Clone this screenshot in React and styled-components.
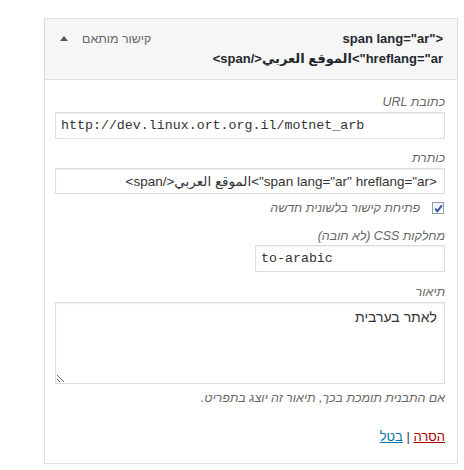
import styled, { createGlobalStyle } from "styled-components"

const GlobalStyle = createGlobalStyle`
    body {
        margin: 0;
        background: #fff;
        font-family: 'Liberation Sans', Arial, 'DejaVu Sans', sans-serif;
        font-size: 12.4px;
        color: #444;
    }
`

const Page = styled.div`
    padding: 18px 0 0 44px;
`

const Panel = styled.div`
    width: 412px;
    border: 1px solid #dfdfdf;
    direction: rtl;
`

const Header = styled.div`
    display: flex;
    justify-content: space-between;
    align-items: flex-start;
    background: #f6f6f6;
    border-bottom: 1px solid #dfdfdf;
    padding: 10px 14px 10px 15px;
`

const Title = styled.div`
    width: 236px;
    font-weight: bold;
    font-size: 13px;
    line-height: 20px;
    color: #23282d;
`

const Controls = styled.div`
    display: flex;
    align-items: center;
    gap: 14px;
    line-height: 20px;
    color: #666;
`

const Arrow = styled.span`
    width: 0;
    height: 0;
    border-left: 4px solid transparent;
    border-right: 4px solid transparent;
    border-bottom: 5px solid #555;
    margin-bottom: 1px;
`

const Body = styled.div`
    padding: 13px 12px 17px 10px;
`

const Field = styled.div`
    margin-top: ${p => p.$top || 0}px;
    display: flex;
    flex-direction: column;
    align-items: flex-start;
`

const Label = styled.label`
    font-style: italic;
    color: #666;
    line-height: 18px;
    margin-bottom: ${p => p.$gap ?? 1}px;
`

const Input = styled.input`
    box-sizing: border-box;
    width: ${p => p.$half ? "190px" : "100%"};
    height: 27px;
    margin: 0;
    border: 1px solid #ddd;
    box-shadow: inset 0 1px 2px rgba(0, 0, 0, 0.07);
    background: #fff;
    color: #333;
    font-family: ${p => p.$code ? "'Liberation Mono', 'DejaVu Sans Mono', monospace" : "'Liberation Sans', Arial, 'DejaVu Sans', sans-serif"};
    font-size: ${p => p.$code ? "13.3px" : "13.5px"};
    padding: 0 7px 0 5px;
    direction: ${p => p.$code ? "ltr" : "rtl"};
    outline: none;
`

const CheckRow = styled.label`
    display: flex;
    align-items: center;
    gap: 12px;
    line-height: 18px;
    margin-top: 5px;
    padding-right: 1px;
    font-style: italic;
    color: #666;
`

const Box = styled.span`
    box-sizing: border-box;
    width: 12px;
    height: 12px;
    border: 1px solid #8e9cab;
    background: linear-gradient(#f0f2f5, #fff);
    display: flex;
    align-items: center;
    justify-content: center;
`

const TextArea = styled.textarea`
    box-sizing: border-box;
    width: 100%;
    height: 82px;
    margin: 0;
    border: 1px solid #ddd;
    box-shadow: inset 0 1px 2px rgba(0, 0, 0, 0.07);
    font-family: 'Liberation Sans', Arial, 'DejaVu Sans', sans-serif;
    font-size: 14px;
    color: #333;
    padding: 6px 7px;
    direction: rtl;
    outline: none;
`

const Help = styled.p`
    margin: 5px 0 0;
    font-style: italic;
    color: #666;
    line-height: 18px;
`

const Actions = styled.div`
    margin-top: 21px;
    line-height: 18px;
    font-size: 13px;
    color: #444;
`

const Link = styled.a`
    color: ${p => p.$danger ? "#a00" : "#0073aa"};
    text-decoration: underline;
`

export default function App() {
    return (
        <>
            <GlobalStyle />
            <Page>
                <Panel>
                    <Header>
                        <Title>{'<span lang="ar" hreflang="ar">الموقع العربي</span>'}</Title>
                        <Controls>
                            <span>קישור מותאם</span>
                            <Arrow />
                        </Controls>
                    </Header>
                    <Body>
                        <Field>
                            <Label>כתובת URL</Label>
                            <Input $code defaultValue="http://dev.linux.ort.org.il/motnet_arb" />
                        </Field>
                        <Field $top={10}>
                            <Label>כותרת</Label>
                            <Input defaultValue={'<span lang="ar" hreflang="ar">الموقع العربي</span>'} style={{ height: 26 }} />
                        </Field>
                        <CheckRow>
                            <Box>
                                <svg width="9" height="9" viewBox="0 0 9 9">
                                    <path d="M1.2 4.6 L3.4 7.2 L7.8 1.4" fill="none" stroke="#2a4f9a" strokeWidth="1.8" />
                                </svg>
                            </Box>
                            <span>פתיחת קישור בלשונית חדשה</span>
                        </CheckRow>
                        <Field $top={10}>
                            <Label $gap={0}>מחלקות CSS (לא חובה)</Label>
                            <Input $code $half defaultValue="to-arabic" />
                        </Field>
                        <Field $top={11}>
                            <Label>תיאור</Label>
                            <TextArea defaultValue="לאתר בערבית" />
                        </Field>
                        <Help>אם התבנית תומכת בכך, תיאור זה יוצג בתפריט.</Help>
                        <Actions>
                            <Link $danger href="#">הסרה</Link> | <Link href="#">בטל</Link>
                        </Actions>
                    </Body>
                </Panel>
            </Page>
        </>
    )
}
